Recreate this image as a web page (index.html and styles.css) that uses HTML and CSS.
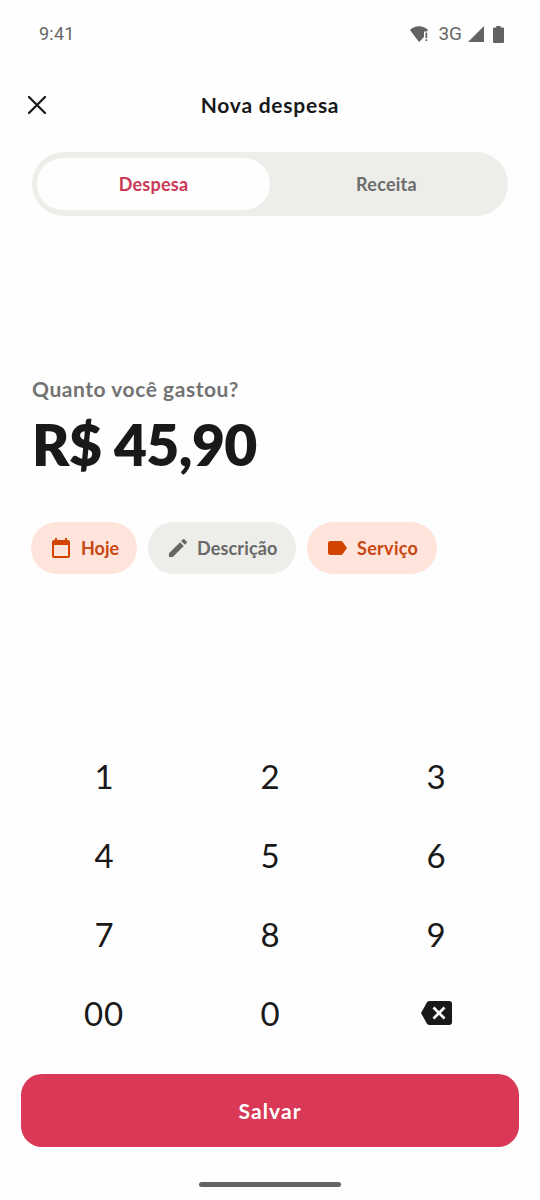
FILE: index.html
```html
<!DOCTYPE html>
<html lang="pt-BR">
<head>
<meta charset="utf-8">
<title>Nova despesa</title>
<link rel="stylesheet" href="styles.css">
</head>
<body>
<div class="screen">
  <div class="status">
    <span class="time">9:41</span>
    <div class="signals">
      <svg class="wifi" width="19" height="16" viewBox="0 0 19 16"><path d="M0 4C5-1 13-1 18 4L17 5.500H14v5.500L9 16z" fill="#626262"/><path d="M15.500 6.500h1.700v5.500h-1.700zM15.500 13.300h1.700V15h-1.700z" fill="#626262"/></svg>
      <span class="network">3G</span>
      <svg class="cell" width="16" height="16" viewBox="0 0 16 16"><path d="M16 0v16H0z" fill="#626262"/></svg>
      <svg class="battery" width="11" height="17" viewBox="0 0 11 17"><path d="M3.3 0h4.4v1.500H10q1 0 1 1V16q0 1-1 1H1q-1 0-1-1V2.500q0-1 1-1h2.300z" fill="#626262"/></svg>
    </div>
  </div>
  <header class="header">
    <svg class="close" width="20" height="20" viewBox="0 0 20 20"><path d="M2 2l16 16M18 2L2 18" fill="none" stroke="#191919" stroke-width="2.3" stroke-linecap="round"/></svg>
    <h1 class="title">Nova despesa</h1>
  </header>
  <div class="tabs">
    <div class="tab tab-active"><span>Despesa</span></div>
    <div class="tab"><span>Receita</span></div>
  </div>
  <section class="summary">
    <div class="question">Quanto você gastou?</div>
    <div class="amount">R$ 45,90</div>
  </section>
  <div class="chips">
    <div class="chip chip-date">
      <svg width="18" height="20" viewBox="0 0 18 20"><path fill-rule="evenodd" d="M3 0h2v2h8V0h2v2h1q2 0 2 2v14q0 2-2 2H2q-2 0-2-2V4q0-2 2-2h1zM2 7v11h14V7z" fill="#d34403"/></svg>
      <span>Hoje</span>
    </div>
    <div class="chip chip-note">
      <svg width="18" height="18" viewBox="3 3 18 18"><path d="M3 17.25V21h3.75L17.81 9.94l-3.75-3.75zM20.71 7.04a1 1 0 0 0 0-1.41l-2.34-2.34a1 1 0 0 0-1.41 0l-1.83 1.83 3.75 3.75z" fill="#676766"/></svg>
      <span>Descrição</span>
    </div>
    <div class="chip chip-category">
      <svg width="19" height="14" viewBox="0 0 19 14"><path d="M2 0h11q1 0 1.7.9L19 7l-4.3 6.1Q14 14 13 14H2q-2 0-2-2V2q0-2 2-2z" fill="#d34403"/></svg>
      <span>Serviço</span>
    </div>
  </div>
  <div class="keypad">
    <span class="key">1</span><span class="key">2</span><span class="key">3</span>
    <span class="key">4</span><span class="key">5</span><span class="key">6</span>
    <span class="key">7</span><span class="key">8</span><span class="key">9</span>
    <span class="key key-wide">00</span><span class="key">0</span>
    <span class="key"><svg class="erase" width="31" height="24" viewBox="0 0 31 24"><path d="M8.5 0H28q3 0 3 3v18q0 3-3 3H8.500Q7 24 6 22.700L0 12 6 1.300Q7 0 8.500 0z" fill="#191919"/><path d="M12.500 6.500l11 11M23.500 6.500L12.500 17.500" stroke="#fff" stroke-width="2.700"/></svg></span>
  </div>
  <button class="save"><span>Salvar</span></button>
  <div class="home-bar"></div>
</div>
</body>
</html>
```
FILE: styles.css
```css
* { box-sizing: border-box; }
body { margin: 0; background: #fefefe; }
.screen {
  width: 540px;
  height: 1200px;
  display: flex;
  flex-direction: column;
  overflow: hidden;
  background: #fefefe;
  color: #191919;
  font-family: Lato, "Liberation Sans", sans-serif;
  font-weight: 700;
}
svg { display: block; flex: none; }
.status {
  height: 68px;
  padding: 0 36px 0 39px;
  display: flex;
  align-items: center;
  justify-content: space-between;
  font: 400 18px/20px Roboto, sans-serif;
  color: #686868;
}
.time { letter-spacing: 0.2px; }
.signals { display: flex; align-items: center; }
.network { margin: 0 6px 0 9px; font-size: 19px; }
.battery { margin-left: 9px; }
.header {
  height: 74px;
  padding: 0 27px;
  display: grid;
  grid-template-columns: 20px 1fr 20px;
  align-items: center;
}
.title { margin: 0; text-align: center; font-size: 21px; line-height: 26px; letter-spacing: 0.75px; }
.tabs {
  height: 64px;
  margin: 10px 32px 0 32px;
  padding: 6px 5px;
  display: flex;
  border-radius: 32px;
  background: #ededea;
}
.tab {
  flex: 1;
  display: flex;
  align-items: center;
  justify-content: center;
  border-radius: 26px;
  color: #6c6c6b;
  font-size: 18px;
  letter-spacing: 0.25px;
}
.tab-active { background: #fefefe; color: #cb3855; }
.summary { margin-top: 160px; padding-left: 32px; }
.question { font-size: 21px; line-height: 26px; letter-spacing: 0.55px; color: #737373; }
.amount { margin-top: 8px; font-size: 57px; line-height: 68px; font-weight: 800; letter-spacing: -0.6px; white-space: nowrap; }
.chips { margin-top: 44px; padding-left: 31px; display: flex; gap: 11px; }
.chip {
  height: 52px;
  display: flex;
  align-items: center;
  gap: 11px;
  padding-left: 21px;
  border-radius: 26px;
  font-size: 18px;
  white-space: nowrap;
}
.chip-date { width: 106px; background: #fee4da; color: #ca4613; }
.chip-note { width: 148px; gap: 10px; letter-spacing: 0.15px; background: #ededea; color: #686867; }
.chip-category { width: 130px; gap: 10px; letter-spacing: 0.3px; background: #fee4da; color: #ca4613; }
.keypad {
  margin: 162px 21px 0;
  display: grid;
  grid-template-columns: repeat(3, 166px);
  grid-template-rows: repeat(4, 79px);
}
.key {
  display: flex;
  align-items: center;
  justify-content: center;
  font-size: 33px;
  font-weight: 400;
}
.key-wide { letter-spacing: 0.8px; }
.erase { margin: 1px 0 0 1px; }
.save {
  height: 73px;
  margin: 22px 21px 0;
  padding: 0;
  border: 0;
  border-radius: 21px;
  background: #d93957;
  color: #fff;
  font: 700 21px Lato, sans-serif;
  letter-spacing: 1.1px;
}
.home-bar { width: 142px; height: 5px; margin: 35px 0 0 199px; border-radius: 3px; background: #646464; }
```
